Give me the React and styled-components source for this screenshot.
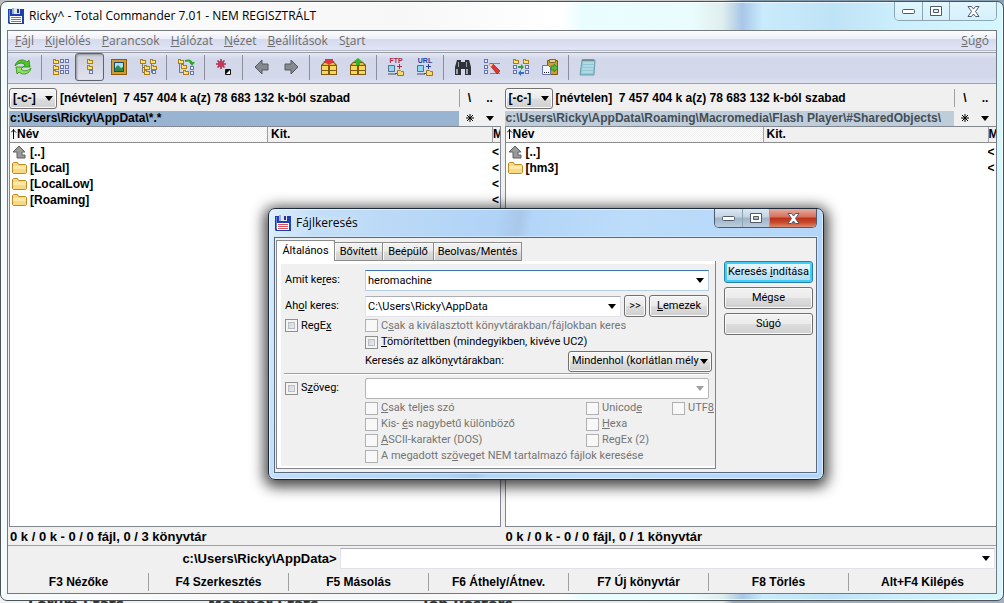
import React from "react";
import styled, { createGlobalStyle, css } from "styled-components";

const Global = createGlobalStyle`
  *, *::before, *::after { box-sizing: border-box; }
  body { margin: 0; background: #c9d3da; }
  button, input, select { font: inherit; color: inherit; margin: 0; }
`;

const ui = `"Liberation Sans", Arial, sans-serif`;
const caption = `"Open Sans", "Noto Sans", sans-serif`;
const dialogFont = `Roboto, "Liberation Sans", sans-serif`;

/* ---------- desktop and window chrome ---------- */

const Desktop = styled.div`
  position: relative;
  display: flex;
  flex-direction: column;
  min-height: 100vh;
  padding: 1px 0 2px;
  overflow: hidden;
  background: linear-gradient(90deg, #b9bdbf 0, #c8cccd 72%, #7f97ab 74%, #8aa0b4 100%);
`;

const PageBehind = styled.div`
  position: absolute;
  left: 0;
  right: 0;
  bottom: -10px;
  height: 18px;
  display: flex;
  padding-left: 28px;
  background: linear-gradient(90deg, #eef2f4 0, #e2e6e6 72%, #9aaabc 73%, #a5afbf 100%);
  color: #333;
  font: bold 14px/18px "DejaVu Sans", sans-serif;
`;

const BehindHeading = styled.span`
  flex: 0 0 ${(p) => p.$w}px;
`;

const Frame = styled.div`
  position: relative;
  flex: 1;
  display: flex;
  flex-direction: column;
  padding: 0 6px 6px;
  border: 1px solid #4c5357;
  border-radius: 7px;
  background:
    linear-gradient(90deg, #f4fbfc 0, #fbfbfb 10%, #f7f7f7 40%, #fff 56%, #e9fdff 58%, #eafcfd 69%, #dfeeee 72%, #a9c6e8 74%, #c9ebfc 76%, #bfe3f6 83%, #cdeffd 90%, #d5f7ff 100%);
  box-shadow: inset 0 0 0 1px #ffffffb0;
`;

const TitleBar = styled.header`
  height: 28px;
  flex: none;
  display: flex;
  align-items: flex-start;
  padding-left: 1px;
  font: 12px/28px ${caption};
  color: #000;
`;

const TitleIcon = styled.span`
  display: flex;
  padding: 6px 5px 0 0;
`;

const TitleText = styled.h1`
  margin: 0;
  flex: 1;
  font: inherit;
`;

const CaptionButtons = styled.div`
  display: flex;
  height: 19px;
  border: 1px solid ${(p) => (p.$dialog ? "#4d5b6b" : "#8ba5b1")};
  border-top: 0;
  border-radius: 0 0 5px 5px;
  overflow: hidden;
`;

const CaptionButton = styled.button`
  width: ${(p) => p.$w}px;
  padding: 0;
  border: 0;
  border-left: ${(p) => (p.$first ? "0" : "1px solid #8ba5b1")};
  display: flex;
  align-items: center;
  justify-content: center;
  background: ${(p) =>
    p.$tone === "red"
      ? "linear-gradient(#e8ab9d 0, #d4705d 45%, #bb3118 50%, #c8492c 75%, #dd8a6c 100%)"
      : p.$tone === "glass"
      ? "linear-gradient(#dce9f4 0, #c3d2e2 45%, #9fb3c9 50%, #bccede 100%)"
      : "linear-gradient(#e2f6fd, #d5f0fa)"};
`;

const Client = styled.main`
  flex: 1;
  display: flex;
  flex-direction: column;
  border: 1px solid #74797d;
  background: #f0f0f0;
  font: bold 12px/16px ${ui};
  color: #000;
  min-width: 0;
`;

/* ---------- menu and tool bar ---------- */

const MenuBar = styled.nav`
  height: 20px;
  flex: none;
  display: flex;
  align-items: center;
  padding: 0 7px 0 7px;
  gap: 11px;
  background: linear-gradient(#fdfdff 0, #eef0f9 40%, #d4dbed 45%, #dfe5f5 100%);
  border-bottom: 1px solid #b4b8c4;
  font: 12px/18px ${caption};
  color: #6d6d6d;
`;

const MenuItem = styled.button`
  padding: 0;
  border: 0;
  background: none;
  white-space: nowrap;
  margin-left: ${(p) => (p.$end ? "auto" : "0")};
`;

const ToolBar = styled.div`
  height: 32px;
  flex: none;
  display: flex;
  align-items: center;
  margin-top: 1px;
  padding: 0 0 2px;
  border-top: 1px solid #9a9ca6;
  border-bottom: 1px solid #a0a0a0;
  background: linear-gradient(#e4e8f5 0, #d2d7ea 20%, #d3d8ea 80%, #dde2f2 100%);
`;

const ToolButton = styled.button`
  width: 29px;
  height: 28px;
  padding: 0;
  display: flex;
  align-items: center;
  justify-content: center;
  border: 1px solid transparent;
  background: none;
  ${(p) =>
    p.$pressed &&
    css`
      border-color: #60646e;
      border-radius: 3px;
      background: linear-gradient(#cdd0da, #e0e3ee);
      box-shadow: inset 1px 1px 2px #8d919c;
    `}
`;

const ToolRule = styled.span`
  width: 1px;
  height: 25px;
  margin: 0 4px;
  background: #8c8f9b;
`;

/* ---------- file panels ---------- */

const Panels = styled.div`
  flex: 1;
  display: grid;
  grid-template-columns: 1fr 1fr;
  column-gap: 4px;
  padding-left: 1px;
  min-height: 0;
`;

const Panel = styled.section`
  display: flex;
  flex-direction: column;
  min-width: 0;
`;

const DriveRow = styled.div`
  height: 26px;
  display: flex;
  align-items: center;
  padding-top: 2px;
  white-space: nowrap;
`;

const SelectBox = styled.span`
  position: relative;
  display: flex;
  flex: none;
  width: ${(p) => p.$w}px;
  height: 21px;
  &::after {
    content: "";
    position: absolute;
    right: 4px;
    top: 8px;
    border: 4px solid transparent;
    border-top: 5px solid #000;
    border-bottom: 0;
    pointer-events: none;
  }
`;

const Select = styled.select`
  appearance: none;
  width: 100%;
  padding: 0 12px 0 3px;
  border: 1px solid #707070;
  border-radius: 3px;
  background: linear-gradient(#f4f4f4 0, #ebebeb 48%, #dddddd 52%, #cfcfcf 100%);
  box-shadow: inset 0 0 0 1px #fafafa;
  overflow: hidden;
`;

const FreeSpace = styled.span`
  flex: 1;
  min-width: 0;
  overflow: hidden;
  padding-left: 3px;
  white-space: pre;
`;

const SideButtons = styled.span`
  flex: none;
  width: 42px;
  height: ${(p) => (p.$rule ? "18px" : "16px")};
  display: flex;
  align-items: center;
  border-left: ${(p) => (p.$rule ? "1px solid #a0a0a0" : "1px solid #f0f0f0")};
`;

const SideButton = styled.button`
  width: 20px;
  padding: 0;
  border: 0;
  background: none;
  display: flex;
  justify-content: center;
`;

const PathRow = styled.div`
  height: 16px;
  display: flex;
  align-items: center;
`;

const Path = styled.div`
  flex: 1;
  min-width: 0;
  height: 15px;
  overflow: hidden;
  white-space: nowrap;
  padding-left: 1px;
  line-height: 15px;
  background: ${(p) => (p.$active ? "#99b4d1" : "#bfcddb")};
  color: ${(p) => (p.$active ? "#000" : "#434e54")};
`;

const ListBox = styled.div`
  flex: 1;
  min-height: 240px;
  overflow: hidden;
  background: #fff;
  border: 1px solid #828790;
  border-right-width: ${(p) => (p.$open ? "0" : "1px")};
`;

const FileTable = styled.table`
  width: 100%;
  table-layout: fixed;
  border-collapse: separate;
  border-spacing: 0;
  th, td { padding: 0 0 0 2px; text-align: left; overflow: hidden; white-space: nowrap; height: 16px; }
  td:last-child { padding-left: 0; }
  th { border-bottom: 1px solid #8d8d8d; border-left: 1px solid #a0a0a0; line-height: 15px; padding-left: 3px; }
  th:first-child {
    border-left: 0;
    padding-left: 1px;
    background: repeating-conic-gradient(#f0f0f0 0 25%, #fff 0 50%) 0 0 / 2px 2px;
  }
  th:last-child { padding-left: 0; }
  th:not(:first-child) { background: #f0f0f0; }
  tbody::before { content: ""; display: block; height: 1px; }
`;

const Col = styled.col`
  width: ${(p) => (p.$w ? `${p.$w}px` : "auto")};
`;

const Entry = styled.span`
  display: flex;
  align-items: center;
  gap: 2px;
  height: 16px;
`;

const SortArrow = styled.svg`
  display: inline-block;
  vertical-align: -1px;
`;

const StatusLine = styled.div`
  height: 18px;
  padding-left: 1px;
  font-size: 13px;
  line-height: 20px;
  white-space: pre;
  overflow: hidden;
`;

/* ---------- command line and function keys ---------- */

const CommandRow = styled.div`
  flex: none;
  display: flex;
  align-items: center;
  height: 24px;
  border-top: 1px solid #a0a0a0;
  padding: 2px 1px 0 0;
  gap: 3px;
  font-size: 13px;
`;

const Prompt = styled.label`
  flex: 1;
  text-align: right;
`;

const Combo = styled.span`
  display: flex;
  flex: ${(p) => p.$flex || "1"};
  min-width: 0;
  height: 21px;
  align-items: center;
  background: #fff;
  border: 1px solid ${(p) => (p.$focus ? "#b5cfe7" : "#e2e3ea")};
  border-top-color: ${(p) => (p.$focus ? "#3d7bad" : "#abadb3")};
  ${(p) => p.$disabled && "border-color: #b5b5b5; border-radius: 2px;"}
`;

const ComboInput = styled.input`
  flex: 1;
  min-width: 0;
  height: 100%;
  padding: 0 2px;
  border: 0;
  outline: 0;
  background: none;
`;

const ComboArrow = styled.button`
  width: 16px;
  height: 100%;
  padding: 0;
  border: 0;
  background: none;
  display: flex;
  align-items: center;
  justify-content: center;
`;

const Triangle = styled.span`
  border: 4px solid transparent;
  border-top: 5px solid ${(p) => p.$c || "#000"};
  border-bottom: 0;
`;

const FunctionKeys = styled.div`
  flex: none;
  display: grid;
  grid-template-columns: repeat(6, 140fr) 148fr;
  height: 24px;
  padding-top: 2px;
  align-items: center;
`;

const FunctionKey = styled.button`
  height: 18px;
  padding: 0;
  border: 0;
  border-left: 1px solid #a0a0a0;
  background: none;
  &:first-child { border-left-color: transparent; }
`;

/* ---------- search dialog ---------- */

const Dialog = styled.section`
  position: absolute;
  left: 268px;
  top: 208px;
  width: 556px;
  display: flex;
  flex-direction: column;
  padding: 0 6px 6px 5px;
  border: 1px solid #1c2a3a;
  border-radius: 7px;
  background: linear-gradient(100deg, #e0effc 0, #c3def7 8%, #b0d3f6 38%, #a9c8ea 42%, #b3d5f7 44%, #bcdcfa 60%, #b1d4f8 100%);
  box-shadow: inset 0 0 0 1px #e6f4ffd0, 0 3px 14px 4px #000000b8;
  font: 11px/16px ${dialogFont};
  color: #000;
`;

const DialogTitleText = styled(TitleText)`
  text-shadow: 0 0 8px #fff;
`;

const DialogClient = styled.form`
  margin: 0;
  display: flex;
  align-items: flex-start;
  border: 1px solid #56697e;
  background: #f0f0f0;
  box-shadow: 0 0 0 1px #cfe5f9;
  padding: 2px 3px 3px 1px;
  gap: 8px;
`;

const TabArea = styled.div`
  flex: 1;
  min-width: 0;
`;

const TabList = styled.div`
  display: flex;
  align-items: flex-end;
  height: 21px;
`;

const Tab = styled.button`
  height: ${(p) => (p.$active ? "21px" : "19px")};
  width: ${(p) => p.$w}px;
  padding: 0;
  white-space: nowrap;
  border: 1px solid #8c8c8c;
  border-bottom: ${(p) => (p.$active ? "0" : "1px solid #8c8c8c")};
  margin-right: -1px;
  background: ${(p) => (p.$active ? "#fff" : "linear-gradient(#f2f2f2 0, #ebebeb 48%, #dddddd 52%, #cfcfcf 100%)")};
  box-shadow: ${(p) => (p.$active ? "none" : "inset 1px 1px 0 #fafafa")};
`;

const TabPage = styled.div`
  border: 1px solid #84848c;
  border-top: 0;
  background: #fff;
  padding: 3px 0 2px 4px;
`;

const TabBody = styled.div`
  background: #f0f0f0;
  padding: 5px 2px 2px 4px;
  overflow: hidden;
`;

const FormRow = styled.div`
  display: grid;
  grid-template-columns: 80px 1fr;
  grid-template-rows: 100%;
  align-items: center;
  height: ${(p) => p.$h}px;
`;

const FieldGroup = styled.div`
  display: flex;
  align-items: center;
  gap: 3px;
  padding-right: ${(p) => p.$pr ?? 4}px;
  white-space: nowrap;
`;

const FieldLabel = styled.label`
  white-space: nowrap;
  flex: ${(p) => (p.$grow ? 1 : "none")};
`;

const CheckLabel = styled.label`
  display: flex;
  align-items: center;
  gap: 3px;
  flex: none;
  width: ${(p) => (p.$w ? `${p.$w}px` : "auto")};
  white-space: nowrap;
  color: ${(p) => (p.$off ? "#757575" : "#000")};
`;

const CheckInput = styled.input`
  appearance: none;
  flex: none;
  width: 13px;
  height: 13px;
  margin: 0;
  border: 1px solid #8e8f8f;
  background: linear-gradient(135deg, #c6cbd1, #f6f6f6);
  box-shadow: inset 0 0 0 2px #f4f4f4, inset 0 0 0 3px #b9bec5;
  &:disabled {
    border-color: #b1b1b1;
    background: #f8f8f8;
    box-shadow: none;
  }
`;

const Divider = styled.hr`
  height: 2px;
  margin: 5px 4px 1px -1px;
  border: 0;
  border-top: 1px solid #a0a0a0;
  background: #fff;
`;

const PushButton = styled.button`
  height: 22px;
  width: ${(p) => (p.$w ? `${p.$w}px` : "100%")};
  flex: none;
  padding: 0;
  white-space: nowrap;
  border: 1px solid #707070;
  border-radius: 3px;
  background: linear-gradient(#f3f3f3 0, #ebebeb 48%, #dddddd 52%, #cfcfcf 100%);
  box-shadow: inset 0 0 0 1px #fafafa;
  ${(p) =>
    p.$primary &&
    css`
      border-color: #2c7fa8;
      background: linear-gradient(#eaf6fd 0, #dcf0fb 48%, #c4e5f6 52%, #b0dcf2 100%);
      box-shadow: inset 0 0 0 2px #3ed0f8;
    `}
`;

const ActionColumn = styled.div`
  width: 89px;
  display: flex;
  flex-direction: column;
  gap: 4px;
  padding-top: 21px;
`;

/* ---------- drawings ---------- */

const Svg = ({ s = 18, children }) => (
  <svg width={s} height={s} viewBox={`0 0 ${s} ${s}`} aria-hidden="true">
    {children}
  </svg>
);

const FloppyIcon = () => (
  <Svg s={16}>
    <path d="M0 1h16v15H1l-1-1z" fill="#1f3fae" />
    <path d="M1 2h1v12H1z" fill="#5b83e6" />
    <path d="M4 0h8v6H4z" fill="#dfe6f2" />
    <path d="M9 1h2v4H9z" fill="#1d3a9c" />
    <path d="M4 0h2v6H4z" fill="#9fb0d0" />
    <path d="M2 8h12v7H2z" fill="#fff" />
    <path d="M3 9h10v1H3zM3 11h10v1H3zM3 13h10v1H3z" fill="#e0505a" />
  </Svg>
);

const Fold = ({ x, y }) => (
  <g>
    <path d={`M${x} ${y}h3v1h3v4h-6z`} fill="#a87d1c" />
    <path d={`M${x + 1} ${y + 1}h1v1h3v2h-4z`} fill="#ffe27a" />
  </g>
);
const Doc = ({ x, y }) => <rect x={x + 0.5} y={y + 0.5} width="3" height="3" fill="#e8edff" stroke="#6674b4" />;

const RefreshIcon = () => (
  <Svg>
    <path d="M1 8c1-6 8-8 12-4l2-2 1 7H9l2-2C8 4 4 5 1 8z" fill="#4fc22a" stroke="#2c8a18" strokeWidth=".8" />
    <path d="M17 10c-1 6-8 8-12 4l-2 2-1-7h7l-2 2c3 3 7 2 10-1z" fill="#8fe05a" stroke="#2c8a18" strokeWidth=".8" />
  </Svg>
);
const BriefIcon = () => (
  <Svg>
    {[1, 7, 12].map((y) => (
      <g key={y}>
        <Fold x={1} y={y} />
        <Doc x={8} y={y} />
        <Doc x={13} y={y} />
      </g>
    ))}
  </Svg>
);
const FullIcon = () => (
  <Svg>
    <Fold x={6} y={1} />
    <Fold x={6} y={7} />
    <Doc x={8} y={12} />
  </Svg>
);
const ThumbIcon = () => (
  <Svg>
    <path d="M1 1h16v16H1z" fill="#8a5a12" />
    <path d="M2 2h14v14H2z" fill="#d39a30" />
    <path d="M4 4h10v10H4z" fill="#1d4a6a" />
    <path d="M5 5h8v5H5z" fill="#a8e0f4" />
    <path d="M5 10l3-3 3 3 2-1v4H5z" fill="#2d8a4a" />
  </Svg>
);
const TreeIcon = () => (
  <Svg>
    <Fold x={1} y={1} />
    <path d="M3.500 6v8.500h3M3.500 9.500h3M12.500 6v8.500h2M12.500 9.500h2" stroke="#777" fill="none" />
    <Fold x={5} y={7} />
    <Fold x={5} y={12} />
    <Fold x={11} y={1} />
    <Fold x={12} y={7} />
    <Doc x={13} y={12} />
  </Svg>
);
const BranchIcon = () => (
  <Svg>
    <Fold x={1} y={1} />
    <path d="M2.500 6v8.500h4" stroke="#777" fill="none" />
    <Fold x={4} y={6} />
    <Fold x={6} y={12} />
    <Doc x={13} y={8} />
    <Doc x={13} y={13} />
    <path d="M8 3q6-2 7 3" stroke="#2ba52b" strokeWidth="2" fill="none" />
    <path d="M12 4h6l-3 4z" fill="#2ba52b" />
  </Svg>
);
const SelectIcon = () => (
  <Svg>
    <path d="M6 1v10M1 6h10M2.500 2.500l7 7M9.500 2.500l-7 7" stroke="#b02a4a" strokeWidth="1.600" />
    <circle cx="6" cy="6" r="3" fill="#c03a58" />
    <path d="M10.500 11.500h5v5h-5z" fill="#fff" stroke="#111" />
    <path d="M11 12h4l-4 4z" fill="#111" />
  </Svg>
);
const ArrowIcon = ({ flip }) => (
  <Svg>
    <path
      d={flip ? "M16 9L9 2v4H3v6h6v4z" : "M2 9l7-7v4h6v6H9v4z"}
      fill="#858a90"
      stroke="#55595e"
    />
  </Svg>
);
const PackIcon = ({ up }) => (
  <Svg>
    <path d="M1 7l3-3h10l3 3v10H1z" fill="#7d5a0c" />
    <path d="M2 8h6v4H2zM10 8h6v4h-6zM2 13h6v3H2zM10 13h6v3h-6z" fill="#f7d65c" />
    <path d="M4 5h10l1 2H3z" fill="#e9bd3d" />
    {up ? <path d="M9 0l5 4h-3v3H7V4H4z" fill="#31b52c" /> : <path d="M5 1h8v2h2L9 7 3 3h2z" fill="#e23440" />}
  </Svg>
);
const Letters = styled.text`
  font: bold 7px "Liberation Sans", Arial, sans-serif;
`;
const NetIcon = ({ label, color }) => (
  <Svg s={20}>
    <Letters x="10" y="6" textAnchor="middle" fill={color}>
      {label}
    </Letters>
    <path d="M2.500 8.500h6v6h-6z" fill="#8fd8f4" stroke="#5b6a8a" />
    <path d="M2 16h8v2H2z" fill="#8a93a8" />
    <path d="M11 9.500h5M13.500 7v5" stroke={color} />
    <path d="M9 16.500h3" stroke="#555" />
    <path d="M11.500 13.500h3l1 1h2v4h-6z" fill="#f8d96a" stroke="#9a7420" />
  </Svg>
);
const BinocularsIcon = () => (
  <Svg>
    <path d="M3 2h4v2h4V2h4l2 7v8h-6v-6H7v6H1V9z" fill="#2e3238" />
    <path d="M4 4h1v5H4zM12 4h1v5h-1zM2 11h2v5H2zM12 11h2v5h-2z" fill="#9aa2ac" />
  </Svg>
);
const RenameIcon = () => (
  <Svg>
    <Doc x={1} y={1} />
    <Doc x={1} y={7} />
    <Doc x={1} y={12} />
    <path d="M7 5.500h10M7 15.500h10" stroke="#888" />
    <path d="M6 6h4l7 7-3 3z" fill="#e3342a" stroke="#8f1712" strokeWidth=".6" />
    <path d="M6 6h4l-2 3z" fill="#f7d9a0" />
  </Svg>
);
const SyncIcon = () => (
  <Svg>
    <Fold x={1} y={1} />
    <Fold x={11} y={1} />
    <Doc x={1} y={7} />
    <Doc x={13} y={7} />
    <Doc x={1} y={12} />
    <Doc x={13} y={12} />
    <path d="M6 8h3V6l3 3-3 3v-2H6z" fill="#2ba52b" />
    <path d="M12 14H9v-2l-3 3 3 3v-2h3z" fill="#2b6fd0" />
  </Svg>
);
const ClipboardIcon = () => (
  <Svg>
    <path d="M6.500 2.500h10v14h-10z" fill="#c99f3c" stroke="#7d5a0c" />
    <path d="M8.500 1.500h6v3h-6z" fill="#e8d080" stroke="#7d6a3c" />
    <path d="M1.500 7.500h6l2 2v7h-8z" fill="#f4f6ff" stroke="#6674b4" />
    <path d="M3 14h1v1H3zM5 14h1v1H5zM7 14h1v1H7z" fill="#222" />
    <path d="M10 8h3V6l4 4-4 4v-2h-3z" fill="#53bb33" stroke="#2a7a1a" strokeWidth=".7" />
  </Svg>
);
const NotepadIcon = () => (
  <Svg>
    <path d="M3 2h13l-1 15H1z" fill="#8fc9d8" stroke="#5f8fa0" strokeWidth=".8" />
    <path d="M4 5h11M4 8h11M3 11h11M3 14h11" stroke="#cfeaf1" />
    <path d="M4 1v2M6 1v2M8 1v2M10 1v2M12 1v2M14 1v2" stroke="#666" />
  </Svg>
);

const FolderIcon = () => (
  <Svg s={16}>
    <path d="M.500 3.500l1-1h4l1 2h7l1 1v7l-1 1h-12l-1-1z" fill="#f8d983" stroke="#c08a1e" />
    <path d="M1 6h13v3H1z" fill="#fdeaa8" />
  </Svg>
);
const UpIcon = () => (
  <Svg s={16}>
    <path d="M7 2l6 6H10v3h3v3H5V8H1z" fill="#9a9a9a" stroke="#606060" />
  </Svg>
);

const MinimizeGlyph = () => (
  <svg width="13" height="6" viewBox="0 0 13 6" aria-hidden="true">
    <rect x=".5" y="1.500" width="12" height="4" rx="1" fill="#fff" stroke="#515a6b" />
  </svg>
);
const MaximizeGlyph = () => (
  <svg width="12" height="10" viewBox="0 0 12 10" aria-hidden="true">
    <path d="M.5.5h11v9H.500zM3.500 3.500v3h5v-3z" fill="#fff" fillRule="evenodd" stroke="#515a6b" />
  </svg>
);
const CloseGlyph = () => (
  <svg width="13" height="11" viewBox="0 0 13 11" aria-hidden="true">
    <path d="M1 .5h3.500l2 2.500 2-2.500H12L8.500 5.500l3.500 5H8.500l-2-2.500-2 2.500H1l3.500-5z" fill="#fff" stroke="#515a6b" />
  </svg>
);

/* ---------- composed parts ---------- */

const WindowButtons = ({ dialog }) => (
  <CaptionButtons $dialog={dialog}>
    <CaptionButton type="button" aria-label="Kis méret" $first $w={27} $tone={dialog && "glass"}>
      <MinimizeGlyph />
    </CaptionButton>
    <CaptionButton type="button" aria-label="Teljes méret" $w={27} $tone={dialog && "glass"}>
      <MaximizeGlyph />
    </CaptionButton>
    <CaptionButton type="button" aria-label="Bezárás" $w={47} $tone={dialog && "red"}>
      <CloseGlyph />
    </CaptionButton>
  </CaptionButtons>
);

const menus = [
  ["F", "ájl"],
  ["K", "ijelölés"],
  ["P", "arancsok"],
  ["H", "álózat"],
  ["N", "ézet"],
  ["B", "eállítások"],
];

const tools = [
  ["Frissítés", <RefreshIcon />],
  null,
  ["Rövid nézet", <BriefIcon />],
  ["Teljes nézet", <FullIcon />, true],
  ["Miniatűrök", <ThumbIcon />],
  ["Fa", <TreeIcon />],
  null,
  ["Ágnézet", <BranchIcon />],
  null,
  ["Kijelölés megfordítása", <SelectIcon />],
  null,
  ["Vissza", <ArrowIcon />],
  ["Előre", <ArrowIcon flip />],
  null,
  ["Tömörítés", <PackIcon />],
  ["Kicsomagolás", <PackIcon up />],
  null,
  ["FTP kapcsolódás", <NetIcon label="FTP" color="#a8284a" />],
  ["Új kapcsolat", <NetIcon label="URL" color="#2a3f9c" />],
  null,
  ["Keresés", <BinocularsIcon />],
  ["Csoportos átnevezés", <RenameIcon />],
  ["Szinkronizálás", <SyncIcon />],
  ["Másolás vágólapra", <ClipboardIcon />],
  null,
  ["Jegyzettömb", <NotepadIcon />],
];

const FilePanel = ({ path, active, entries, status }) => (
  <Panel>
    <DriveRow>
      <SelectBox $w={48}>
        <Select aria-label="Meghajtó">
          <option>[-c-]</option>
        </Select>
      </SelectBox>
      <FreeSpace>{"[névtelen]  7 457 404 k a(z) 78 683 132 k-ból szabad"}</FreeSpace>
      <SideButtons $rule>
        <SideButton>\</SideButton>
        <SideButton>..</SideButton>
      </SideButtons>
    </DriveRow>
    <PathRow>
      <Path $active={active}>{path}</Path>
      <SideButtons>
        <SideButton aria-label="Kedvencek">
          <svg width="8" height="8" viewBox="0 0 8 8" aria-hidden="true">
            <path d="M4 0v8M0 4h8M1 1l6 6M7 1L1 7" stroke="#000" />
          </svg>
        </SideButton>
        <SideButton aria-label="Előzmények">
          <Triangle />
        </SideButton>
      </SideButtons>
    </PathRow>
    <ListBox $open={!active}>
      <FileTable>
        <colgroup>
          <Col $w={257} />
          <Col $w={225} />
          <Col />
        </colgroup>
        <thead>
          <tr>
            <th>
              <SortArrow width="6" height="10" viewBox="0 0 6 10" aria-hidden="true">
                <path d="M2.500 0v10M0 3.500L2.500 1 5 3.500" stroke="#000" fill="none" />
              </SortArrow>
              Név
            </th>
            <th>Kit.</th>
            <th>M</th>
          </tr>
        </thead>
        <tbody>
          {entries.map((name, i) => (
            <tr key={name}>
              <td>
                <Entry>
                  {i === 0 ? <UpIcon /> : <FolderIcon />}
                  {name}
                </Entry>
              </td>
              <td />
              <td>&lt;</td>
            </tr>
          ))}
        </tbody>
      </FileTable>
    </ListBox>
    <StatusLine>{status}</StatusLine>
  </Panel>
);

const Check = ({ off, w, children }) => (
  <CheckLabel $off={off} $w={w}>
    <CheckInput type="checkbox" disabled={off} />
    <span>{children}</span>
  </CheckLabel>
);

const SearchDialog = () => (
  <Dialog role="dialog" aria-label="Fájlkeresés">
    <TitleBar>
      <TitleIcon>
        <FloppyIcon />
      </TitleIcon>
      <DialogTitleText as="h2">Fájlkeresés</DialogTitleText>
      <WindowButtons dialog />
    </TitleBar>
    <DialogClient onSubmit={(e) => e.preventDefault()}>
      <TabArea>
        <TabList role="tablist">
          <Tab type="button" role="tab" aria-selected="true" $active $w={59}>Általános</Tab>
          <Tab type="button" role="tab" $w={49}>Bővített</Tab>
          <Tab type="button" role="tab" $w={52}>Beépülő</Tab>
          <Tab type="button" role="tab" $w={89}>Beolvas/Mentés</Tab>
        </TabList>
        <TabPage>
          <TabBody>
            <FormRow $h={22}>
              <FieldLabel htmlFor="what">Amit ke<u>r</u>es:</FieldLabel>
              <FieldGroup>
                <Combo $focus>
                  <ComboInput id="what" defaultValue="heromachine" />
                  <ComboArrow type="button" aria-label="Korábbi keresések"><Triangle /></ComboArrow>
                </Combo>
              </FieldGroup>
            </FormRow>
            <FormRow $h={30}>
              <FieldLabel htmlFor="where">Ah<u>o</u>l keres:</FieldLabel>
              <FieldGroup>
                <Combo>
                  <ComboInput id="where" defaultValue="C:\Users\Ricky\AppData" />
                  <ComboArrow type="button" aria-label="Korábbi helyek"><Triangle /></ComboArrow>
                </Combo>
                <PushButton type="button" $w={22}>&gt;&gt;</PushButton>
                <PushButton type="button" $w={60}><u>L</u>emezek</PushButton>
              </FieldGroup>
            </FormRow>
            <FormRow $h={9}>
              <Check>RegE<u>x</u></Check>
              <Check off>C<u>s</u>ak a kiválasztott könyvtárakban/fájlokban keres</Check>
            </FormRow>
            <FormRow $h={24}>
              <span />
              <Check><u>T</u>ömörítettben (mindegyikben, kivéve UC2)</Check>
            </FormRow>
            <FormRow $h={14}>
              <span />
              <FieldGroup $pr={1}>
                <FieldLabel $grow htmlFor="depth">Keresés az alkön<u>y</u>vtárakban:</FieldLabel>
                <SelectBox $w={144}>
                  <Select id="depth">
                    <option>Mindenhol (korlátlan mély</option>
                  </Select>
                </SelectBox>
              </FieldGroup>
            </FormRow>
            <Divider />
            <FormRow $h={24}>
              <Check>S<u>z</u>öveg:</Check>
              <FieldGroup>
                <Combo $disabled>
                  <ComboInput disabled aria-label="Szöveg" />
                  <ComboArrow type="button" disabled aria-label="Korábbi szövegek"><Triangle $c="#a0a0a0" /></ComboArrow>
                </Combo>
              </FieldGroup>
            </FormRow>
            <FormRow $h={16}>
              <span />
              <FieldGroup $pr={0}>
                <Check off w={218}><u>C</u>sak teljes szó</Check>
                <Check off w={83}>Unicod<u>e</u></Check>
                <Check off>UTF<u>8</u></Check>
              </FieldGroup>
            </FormRow>
            <FormRow $h={16}>
              <span />
              <FieldGroup>
                <Check off w={218}>Kis- <u>é</u>s nagybetű különböző</Check>
                <Check off><u>H</u>exa</Check>
              </FieldGroup>
            </FormRow>
            <FormRow $h={16}>
              <span />
              <FieldGroup>
                <Check off w={218}><u>A</u>SCII-karakter (DOS)</Check>
                <Check off>RegEx (2)</Check>
              </FieldGroup>
            </FormRow>
            <FormRow $h={16}>
              <span />
              <Check off>A megadott sz<u>ö</u>veget NEM tartalmazó fájlok keresése</Check>
            </FormRow>
          </TabBody>
        </TabPage>
      </TabArea>
      <ActionColumn>
        <PushButton type="submit" $primary>Keresés <u>i</u>ndítása</PushButton>
        <PushButton type="button">Mégse</PushButton>
        <PushButton type="button">Súgó</PushButton>
      </ActionColumn>
    </DialogClient>
  </Dialog>
);

const CommandCombo = () => (
  <Combo $flex="0 0 66.4%">
    <ComboInput id="cmd" />
    <ComboArrow type="button" aria-label="Korábbi parancsok"><Triangle /></ComboArrow>
  </Combo>
);

export default function App() {
  return (
    <Desktop>
      <Global />
      <PageBehind>
        <BehindHeading $w={180}>Forum Stats</BehindHeading>
        <BehindHeading $w={213}>Member Stats</BehindHeading>
        <BehindHeading $w={200}>Top Posters</BehindHeading>
      </PageBehind>
      <Frame>
        <TitleBar>
          <TitleIcon>
            <FloppyIcon />
          </TitleIcon>
          <TitleText>Ricky^ - Total Commander 7.01 - NEM REGISZTRÁLT</TitleText>
          <WindowButtons />
        </TitleBar>
        <Client>
          <MenuBar>
            {menus.map(([key, rest]) => (
              <MenuItem key={key}>
                <u>{key}</u>
                {rest}
              </MenuItem>
            ))}
            <MenuItem>S<u>t</u>art</MenuItem>
            <MenuItem $end><u>S</u>úgó</MenuItem>
          </MenuBar>
          <ToolBar role="toolbar">
            {tools.map((t, i) =>
              t ? (
                <ToolButton key={i} aria-label={t[0]} $pressed={t[2]}>
                  {t[1]}
                </ToolButton>
              ) : (
                <ToolRule key={i} />
              )
            )}
          </ToolBar>
          <Panels>
            <FilePanel
              active
              path="c:\Users\Ricky\AppData\*.*"
              entries={["[..]", "[Local]", "[LocalLow]", "[Roaming]"]}
              status="0 k / 0 k - 0 / 0 fájl, 0 / 3 könyvtár"
            />
            <FilePanel
              path="c:\Users\Ricky\AppData\Roaming\Macromedia\Flash Player\#SharedObjects\"
              entries={["[..]", "[hm3]"]}
              status="0 k / 0 k - 0 / 0 fájl, 0 / 1 könyvtár"
            />
          </Panels>
          <CommandRow>
            <Prompt htmlFor="cmd">c:\Users\Ricky\AppData&gt;</Prompt>
            <CommandCombo />
          </CommandRow>
          <FunctionKeys>
            {["F3 Nézőke", "F4 Szerkesztés", "F5 Másolás", "F6 Áthely/Átnev.", "F7 Új könyvtár", "F8 Törlés", "Alt+F4 Kilépés"].map((k) => (
              <FunctionKey key={k}>{k}</FunctionKey>
            ))}
          </FunctionKeys>
        </Client>
      </Frame>
      <SearchDialog />
    </Desktop>
  );
}
